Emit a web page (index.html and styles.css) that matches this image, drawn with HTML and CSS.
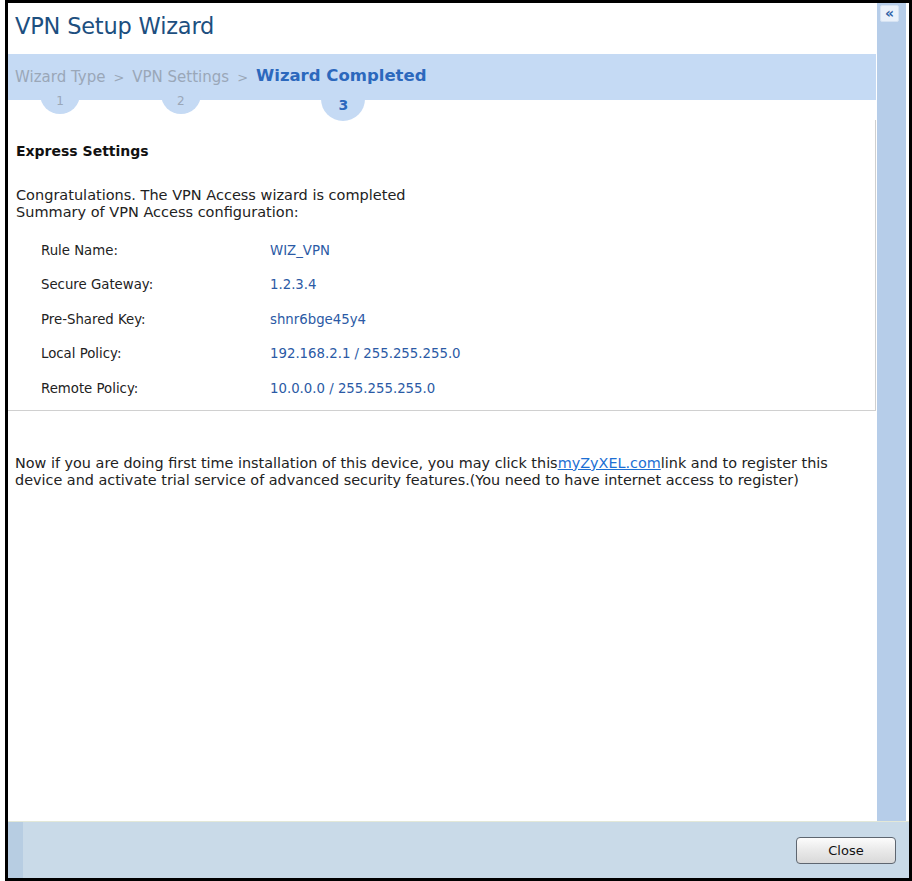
FILE: index.html
```html
<!DOCTYPE html>
<html lang="en">
<head>
  <meta charset="UTF-8" />
  <title>VPN Setup Wizard</title>
  <link rel="stylesheet" href="styles.css">
</head>
<body>
  <div class="frame">
    <div class="top">
      <div class="main">
        <h1 class="title">VPN Setup Wizard</h1>
        <div class="steps">
          <div class="step done">Wizard Type <span class="num">1</span></div>
          <span class="sep">&gt;</span>
          <div class="step done">VPN Settings <span class="num">2</span></div>
          <span class="sep">&gt;</span>
          <div class="step current">Wizard Completed <span class="num">3</span></div>
        </div>

        <div class="panel">
          <h2>Express Settings</h2>
          <p class="intro">Congratulations. The VPN Access wizard is completed<br>Summary of VPN Access configuration:</p>
          <div class="summary">
            <span class="label">Rule Name:</span><span class="value">WIZ_VPN</span>
            <span class="label">Secure Gateway:</span><span class="value">1.2.3.4</span>
            <span class="label">Pre-Shared Key:</span><span class="value">shnr6bge45y4</span>
            <span class="label">Local Policy:</span><span class="value">192.168.2.1 / 255.255.255.0</span>
            <span class="label">Remote Policy:</span><span class="value">10.0.0.0 / 255.255.255.0</span>
          </div>
        </div>

        <p class="note">Now if you are doing first time installation of this device, you may click this<a href="#">myZyXEL.com</a>link and to register this device and activate trial service of advanced security features.(You need to have internet access to register)</p>
      </div>
      <div class="sidebar">
        <button class="collapse">&laquo;</button>
      </div>
    </div>
    <div class="footer">
      <div class="strip"></div>
      <button class="close-btn">Close</button>
    </div>
  </div>
</body>
</html>
```

FILE: styles.css
```css
html, body { margin: 0; padding: 0; background: #fff; }
body { font-family: "DejaVu Sans", Verdana, sans-serif; color: #222; }
.frame { margin-left: 5px; width: 907px; height: 881px; box-sizing: border-box; border: 3px solid #000; display: flex; flex-direction: column; background: #fff; }
.top { flex: 1; display: flex; min-height: 0; }
.main { width: 868px; display: flex; flex-direction: column; }
.sidebar { width: 29px; background: #b6cde9; margin-left: 1px; padding-top: 2px; display: flex; flex-direction: column; align-items: center; }
.collapse { width: 19px; height: 17px; margin-left: -4px; padding: 0; border: 1px solid #d5e2f2; border-radius: 2px; background: #eaf1fa; color: #2f62a6; font-size: 14px; font-weight: bold; line-height: 13px; font-family: "DejaVu Sans", sans-serif; }

.title { margin: 0; height: 51px; padding-left: 7px; font-size: 22.5px; font-weight: normal; line-height: 46px; color: #1d4f7f; letter-spacing: -0.2px; }

.steps { height: 46px; background: #c5daf4; display: flex; align-items: center; padding-left: 7px; font-size: 15px; color: #9aa7b8; }
.sep { margin: 0 8px; font-size: 13px; }
.step { position: relative; }
.step .num { position: absolute; left: 50%; top: 22px; width: 40px; height: 24px; margin-left: -20px; border-radius: 0 0 20px 20px; background: #c5daf4; text-align: center; font-size: 12px; line-height: 22px; color: #9aa7b8; }
.step.current { font-size: 16.5px; font-weight: bold; color: #2c68bd; margin-top: -4px; }
.step.current .num { top: 24px; width: 44px; height: 31px; margin-left: -20px; border-radius: 0 0 22px 22px; font-size: 14px; line-height: 30px; color: #2c68bd; }

.panel { border-bottom: 1px solid #d0d0d0; padding: 43px 0 4px 8px; background: linear-gradient(#d0d0d0, #d0d0d0) right 20px / 1px calc(100% - 20px) no-repeat; }
.panel h2 { margin: 0 0 27px; font-size: 14px; line-height: 17px; font-weight: bold; color: #111; }
.intro { margin: 0 0 12px; font-size: 14.5px; line-height: 17px; color: #222; }
.summary { display: grid; grid-template-columns: 229px auto; grid-auto-rows: 34.5px; align-items: center; padding-left: 25px; font-size: 13.3px; }
.label { color: #222; }
.value { color: #2b5aa5; }

.note { margin: 44px 0 0 7px; font-size: 14.4px; line-height: 17px; color: #222; width: 835px; }
.note a { color: #1c6fd4; text-decoration: underline; }

.footer { height: 56px; background: #c9dae8; border-top: 1px solid #e3e8d8; display: flex; align-items: center; justify-content: flex-end; }
.strip { width: 15px; height: 100%; background: #b7cde2; margin-right: auto; }
.close-btn { width: 100px; height: 27px; margin-right: 13px; border: 1px solid #5e6670; border-radius: 4px; background: linear-gradient(#fcfcfc, #e9e9e9 50%, #d9d9d9); font-family: "DejaVu Sans", sans-serif; font-size: 13px; color: #111; }
```
